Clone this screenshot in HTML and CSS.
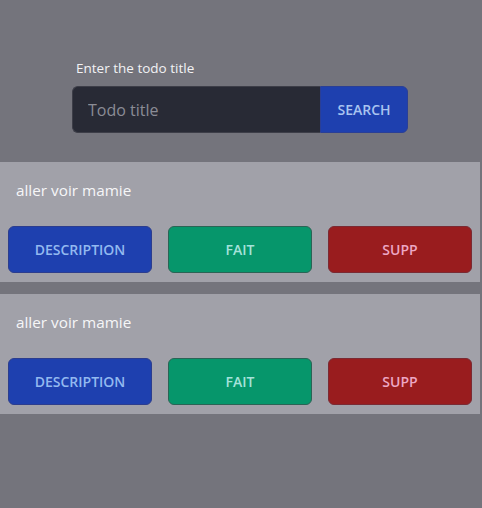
FILE: index.html
```html
<!DOCTYPE html>
<html lang="fr">
<head>
<meta charset="utf-8">
<title>Todo</title>
<link rel="stylesheet" href="styles.css">
</head>
<body>
<div class="page">
  <form class="search-form">
    <label class="search-label" for="title">Enter the todo title</label>
    <div class="search-row">
      <input id="title" class="search-input" type="text" placeholder="Todo title">
      <button type="button" class="search-btn">SEARCH</button>
    </div>
  </form>
  <ul class="todo-list">
    <li class="todo">
      <p class="todo-title">aller voir mamie</p>
      <div class="todo-actions">
        <button type="button" class="btn btn-blue">DESCRIPTION</button>
        <button type="button" class="btn btn-green">FAIT</button>
        <button type="button" class="btn btn-red">SUPP</button>
      </div>
    </li>
    <li class="todo">
      <p class="todo-title">aller voir mamie</p>
      <div class="todo-actions">
        <button type="button" class="btn btn-blue">DESCRIPTION</button>
        <button type="button" class="btn btn-green">FAIT</button>
        <button type="button" class="btn btn-red">SUPP</button>
      </div>
    </li>
  </ul>
</div>
</body>
</html>
```
FILE: styles.css
```css
* { box-sizing: border-box; }
html, body {
  margin: 0;
  padding: 0;
  background: #74747c;
  height: 100%;
}
body {
  font-family: "Open Sans", Lato, sans-serif;
  width: 480px;
}
.page {
  padding-top: 59px;
}
.search-form {
  width: 336px;
  margin: 0 auto;
  display: flex;
  flex-direction: column;
}
.search-label {
  font-size: 13.5px;
  color: #f2f2f4;
  padding-left: 4px;
  line-height: 18px;
  margin-bottom: 9px;
}
.search-row {
  display: flex;
  height: 47px;
}
.search-input {
  flex: 1;
  height: 47px;
  background: #282a35;
  border: 1px solid #3d3e48;
  border-right: none;
  border-radius: 6px 0 0 6px;
  padding: 0 15px;
  font-family: inherit;
  font-size: 16px;
  color: #e5e5e5;
  outline: none;
}
.search-input::placeholder { color: #8b8c95; }
.search-btn {
  width: 88px;
  height: 47px;
  background: #1e40af;
  border: 1px solid #2a3f96;
  border-radius: 0 6px 6px 0;
  color: #a9c4f0;
  font-family: inherit;
  font-weight: 600;
  font-size: 14px;
  padding: 0;
}
.todo-list {
  list-style: none;
  margin: 29px 0 0;
  padding: 0;
  display: flex;
  flex-direction: column;
  gap: 12px;
}
.todo {
  background: #a1a1a9;
  height: 120px;
  padding: 18px 8px 0;
}
.todo-title {
  margin: 0 0 0 8px;
  font-size: 15.3px;
  line-height: 20px;
  color: #f6f6f8;
}
.todo-actions {
  margin-top: 26px;
  display: flex;
  gap: 16px;
}
.btn {
  width: 144px;
  height: 47px;
  border-radius: 6px;
  font-family: inherit;
  font-weight: 600;
  font-size: 14px;
  padding: 0;
}
.btn-blue {
  background: #1e40af;
  border: 1px solid #2c3d8e;
  color: #93b9f0;
}
.btn-green {
  background: #06966b;
  border: 1px solid #2a6455;
  color: #a4e2da;
}
.btn-red {
  background: #991c1e;
  border: 1px solid #7a2a33;
  color: #eda7c4;
}
```
